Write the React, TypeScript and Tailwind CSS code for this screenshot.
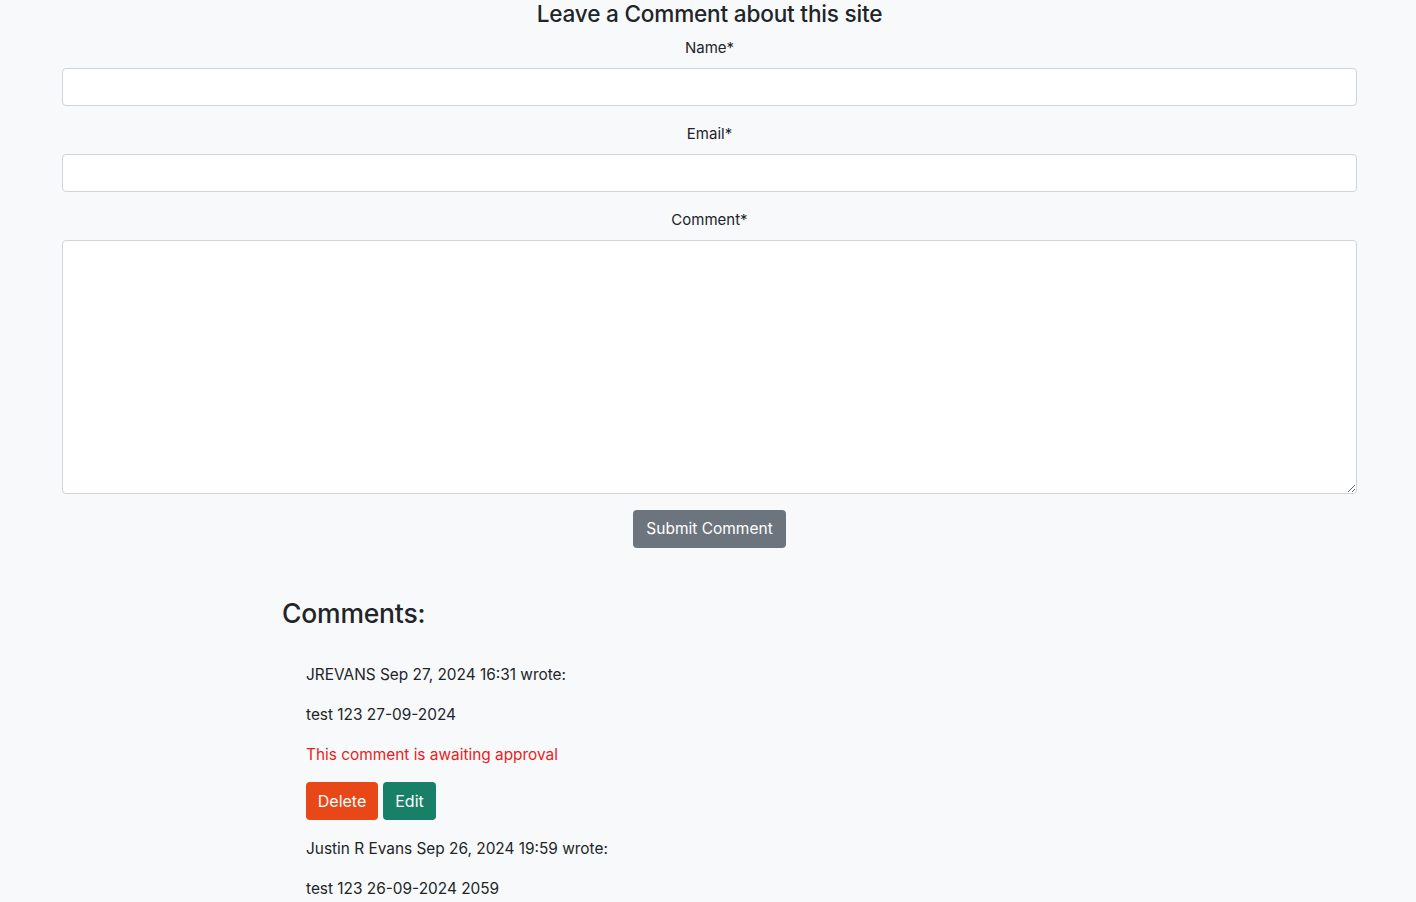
import React from 'react';

const comments = [
  {
    author: 'JREVANS',
    date: 'Sep 27, 2024 16:31',
    body: 'test 123 27-09-2024',
    pending: true,
  },
  {
    author: 'Justin R Evans',
    date: 'Sep 26, 2024 19:59',
    body: 'test 123 26-09-2024 2059',
    pending: false,
  },
];

const App: React.FC = () => {
  return (
    <div
      className="min-h-[902px] bg-[#f8f9fa] text-[#212529] text-base leading-6"
      style={{ fontFamily: 'Inter, "Noto Sans", sans-serif' }}
    >
      <form className="pl-[62px] pr-[59px] flex flex-col items-stretch text-center">
        <h3 className="text-[22.6px] leading-[28px] font-medium mb-[8px] tracking-[-0.2px]">
          Leave a Comment about this site
        </h3>

        <div className="mb-4">
          <label className="block mb-2 text-[15px]">Name*</label>
          <input
            type="text"
            className="block w-full h-[38px] bg-white border border-[#ced4da] rounded-[4px] px-3"
          />
        </div>

        <div className="mb-4">
          <label className="block mb-2 text-[15px]">Email*</label>
          <input
            type="email"
            className="block w-full h-[38px] bg-white border border-[#ced4da] rounded-[4px] px-3"
          />
        </div>

        <div className="mb-4">
          <label className="block mb-2 text-[15px]">Comment*</label>
          <textarea className="block w-full h-[254px] bg-white border border-[#ced4da] rounded-[4px] px-3 py-1.5" />
        </div>

        <div className="flex justify-center">
          <button
            type="button"
            className="h-[38px] w-[153px] bg-[#6c757d] text-white text-[15.5px] rounded-[4px]"
          >
            Submit Comment
          </button>
        </div>
      </form>

      <section className="pl-[282px] pt-[49px] pb-10">
        <h3 className="text-[26.5px] leading-[32px] font-medium mb-2 tracking-[-0.2px]">Comments:</h3>

        <div className="pl-6 pt-[26px] text-[15.4px]">
          {comments.map((c) => (
            <div key={c.author + c.date}>
              <p className="mb-4">
                {c.author} {c.date} wrote:
              </p>
              <p className="mb-4">{c.body}</p>
              {c.pending && (
                <>
                  <p className="mb-[15px] text-[#ea1c1c]">This comment is awaiting approval</p>
                  <div className="flex gap-[5px] mb-[17px]">
                    <button
                      type="button"
                      className="h-[38px] w-[72px] bg-[#e84717] text-white text-[16px] rounded-[4px]"
                    >
                      Delete
                    </button>
                    <button
                      type="button"
                      className="h-[38px] w-[53px] bg-[#198068] text-white text-[16px] rounded-[4px]"
                    >
                      Edit
                    </button>
                  </div>
                </>
              )}
            </div>
          ))}
        </div>
      </section>
    </div>
  );
};

export default App;
